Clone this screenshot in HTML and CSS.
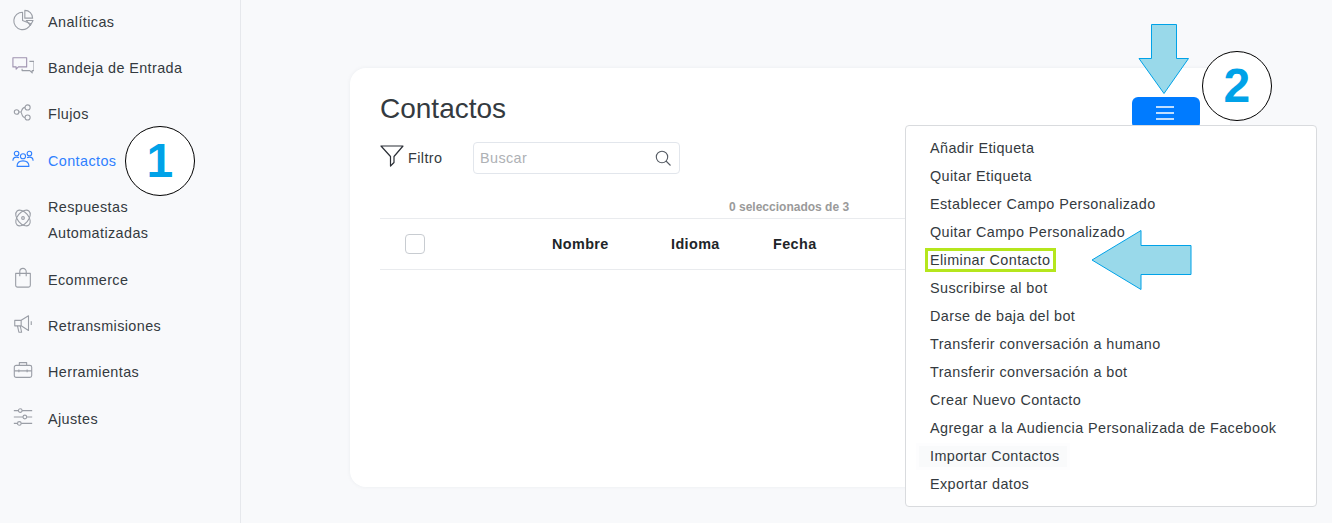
FILE: index.html
```html
<!DOCTYPE html>
<html lang="es">
<head>
<meta charset="utf-8">
<title>Contactos</title>
<link rel="stylesheet" href="styles.css">
</head>
<body>
<div class="app">
  <nav class="sidebar">
    <ul class="nav">
      <li class="nav-item"><svg class="nav-icon" viewBox="0 0 24 24"><g transform="translate(1 -.5)"><path d="M10.500 4a9.500 9.500 0 1 0 9 12.500L10.500 13z"/><path d="M13 2a8.500 8.500 0 0 1 8.500 8.500H13z"/><path d="M14.500 13h7.500l-3 5.500z"/></g></svg><span>Analíticas</span></li>
      <li class="nav-item"><svg class="nav-icon" viewBox="0 0 24 24"><path class="violet" d="M1 3h15v10H7l-2.500 2.500V13H1z"/><path d="M19 7h5v10h-2v2.500L19.500 17H11v-2"/></svg><span>Bandeja de Entrada</span></li>
      <li class="nav-item"><svg class="nav-icon" viewBox="0 0 24 24"><circle cx="5" cy="12" r="2.500"/><circle cx="17" cy="7" r="2.800"/><circle cx="17" cy="18" r="2.800"/><path d="M7.500 12h2c1.500 0 .5-5 4.700-5M9.500 12c1.500 0 .5 6 4.700 6"/></svg><span>Flujos</span></li>
      <li class="nav-item active"><svg class="nav-icon" viewBox="0 0 24 24"><circle cx="5" cy="6" r="2.500"/><circle cx="12" cy="9" r="2.800"/><circle cx="19" cy="6" r="2.500"/><path d="M1 14c0-3 1.500-4 4-4 1 0 2 .2 2.500 .8M16.500 10.800c.5-.6 1.500-.8 2.500-.8 2.500 0 4 1 4 4M5.500 20c0-4 2.500-6 6.500-6s6.500 2 6.500 6z"/></svg><span>Contactos</span></li>
      <li class="nav-item"><svg class="nav-icon" viewBox="0 0 24 24"><ellipse cx="12" cy="12" rx="10" ry="6" transform="rotate(50 12 12)"/><ellipse cx="12" cy="12" rx="10" ry="6" transform="rotate(-50 12 12)"/><circle cx="12" cy="12" r="1.500"/></svg><span>Respuestas Automatizadas</span></li>
      <li class="nav-item"><svg class="nav-icon" viewBox="0 0 24 24"><path d="M4 7h16v13a2 2 0 0 1-2 2H6a2 2 0 0 1-2-2z"/><path d="M8.500 10V5a3.500 3.500 0 0 1 7 0v5"/></svg><span>Ecommerce</span></li>
      <li class="nav-item"><svg class="nav-icon" viewBox="0 0 24 24"><path d="M3 8h7l8-5v16l-8-5H3z"/><path d="M6 14l1.500 7h3l-1.500-7M10 8v6M21 9v4"/></svg><span>Retransmisiones</span></li>
      <li class="nav-item"><svg class="nav-icon" viewBox="0 0 24 24"><rect x="2.500" y="7" width="19" height="13" rx="2"/><path d="M8 7V4h8v3M2.500 13h19M7.500 11.500v3M16.500 11.500v3"/></svg><span>Herramientas</span></li>
      <li class="nav-item"><svg class="nav-icon" viewBox="0 0 24 24"><path d="M2 5h20M2 12h20M2 19h20"/><circle class="knob" cx="9" cy="5" r="2"/><circle class="knob" cx="14" cy="12" r="2"/><circle class="knob" cx="8" cy="19" r="2"/></svg><span>Ajustes</span></li>
    </ul>
  </nav>

  <main class="content">
    <section class="card">
      <header class="card-head">
        <h1 class="title">Contactos</h1>
        <button class="menu-btn" type="button" aria-label="Menú">
          <svg class="burger" viewBox="0 0 18 14"><path d="M0 1h18M0 7h18M0 13h18"/></svg>
        </button>
      </header>
      <div class="tools">
        <div class="filter">
          <svg class="filter-icon" viewBox="0 0 24 22"><path d="M1 1h22l-9 10.500v6L10.500 21V11.500z"/></svg>
          <span>Filtro</span>
        </div>
        <div class="search">
          <span class="placeholder">Buscar</span>
          <svg class="search-icon" viewBox="0 0 16 16"><circle cx="7" cy="7" r="5.700"/><path d="M11 11l4.500 4.500"/></svg>
        </div>
      </div>
      <p class="selected">0 seleccionados de 3</p>
      <div class="table-head">
        <span class="checkbox"></span>
        <span class="col col-name">Nombre</span>
        <span class="col col-lang">Idioma</span>
        <span class="col">Fecha</span>
      </div>
    </section>
  </main>
</div>

<ul class="menu">
  <li>Añadir Etiqueta</li>
  <li>Quitar Etiqueta</li>
  <li>Establecer Campo Personalizado</li>
  <li>Quitar Campo Personalizado</li>
  <li>Eliminar Contacto</li>
  <li>Suscribirse al bot</li>
  <li>Darse de baja del bot</li>
  <li>Transferir conversación a humano</li>
  <li>Transferir conversación a bot</li>
  <li>Crear Nuevo Contacto</li>
  <li>Agregar a la Audiencia Personalizada de Facebook</li>
  <li class="hovered">Importar Contactos</li>
  <li>Exportar datos</li>
</ul>

<div class="badge badge-one">1</div>
<div class="badge badge-two">2</div>
<svg class="arrow arrow-down" viewBox="0 0 52 71"><path d="M13.500 .500h25v34h12L26 69.500 1 34.500h12.500z"/></svg>
<svg class="arrow arrow-left" viewBox="0 0 101 61"><path d="M50 .500v15h50v29H50v15L1 30z"/></svg>
<div class="highlight"></div>
</body>
</html>
```
FILE: styles.css
```css
* { box-sizing: border-box; }
html, body { margin: 0; padding: 0; height: 100%; }
body {
  position: relative;
  overflow: hidden;
  background: #f8f9fb;
  font-family: "Liberation Sans", Arial, sans-serif;
  color: #343a40;
  letter-spacing: .4px;
}
.app { display: flex; height: 523px; }

.sidebar {
  flex: 0 0 241px;
  border-right: 1px solid #e6e8ec;
  overflow: hidden;
}
.nav { list-style: none; margin: -1.500px 0 0; padding: 0 20px 0 12px; }
.nav-item {
  display: flex;
  align-items: center;
  gap: 14px;
  padding: 10.200px 0;
  font-size: 14.400px;
  line-height: 26px;
  color: #343a40;
}
.nav-item span { flex: 1; max-width: 150px; }
.nav-icon {
  flex: 0 0 22px;
  width: 22px;
  height: 22px;
  margin-top: -4px;
  fill: none;
  stroke: #9a9ea6;
  stroke-width: 1.200;
  stroke-linejoin: round;
}
.nav-icon .violet { stroke: #9f93b0; }
.nav-icon .knob { fill: #f8f9fb; }
.nav-item.active, .nav-item.active span { color: #2f80ff; }
.nav-item.active .nav-icon { stroke: #2f80ff; }

.content { flex: 1; padding: 68px 102px 36px 109px; }
.card {
  height: 419px;
  padding: 25px 30px 0;
  background: #fff;
  border-radius: 16px;
  box-shadow: 0 0 4px rgba(40, 50, 70, .06);
}
.card-head { display: flex; justify-content: space-between; align-items: flex-start; }
.title {
  margin: 0;
  font-size: 28px;
  font-weight: 400;
  line-height: 32px;
  letter-spacing: 0;
  color: #343a40;
}
.menu-btn {
  display: flex;
  align-items: center;
  justify-content: center;
  width: 68px;
  height: 32px;
  margin-top: 4px;
  padding: 0 2px 0 0;
  border: 0;
  border-radius: 6px;
  background: #007bff;
}
.burger { width: 18px; height: 14px; fill: none; stroke: #fff; stroke-width: 1.500; }

.tools { display: flex; align-items: center; gap: 32px; margin-top: 13px; height: 32px; }
.filter { display: flex; align-items: center; gap: 4px; font-size: 14.400px; color: #343a40; width: 61px; }
.filter-icon { flex: 0 0 24px; width: 24px; height: 22px; margin-top: -5px; fill: none; stroke: #2b2f36; stroke-width: 1.200; stroke-linejoin: round; }
.search {
  display: flex;
  align-items: center;
  justify-content: space-between;
  width: 207px;
  height: 32px;
  padding: 0 8px 0 6px;
  border: 1px solid #e2e6ec;
  border-radius: 4px;
  background: #fff;
}
.placeholder { font-size: 14.400px; color: #aeb1b5; }
.search-icon { width: 16px; height: 16px; fill: none; stroke: #555b63; stroke-width: 1.100; }

.selected {
  margin: 25px 0 0;
  height: 19px;
  padding-left: 349px;
  font-size: 12px;
  font-weight: 700;
  line-height: 16px;
  letter-spacing: 0;
  color: #9a9a9a;
}
.table-head {
  display: flex;
  align-items: center;
  height: 52px;
  padding-left: 25px;
  border-top: 1px solid #e9ebee;
  border-bottom: 1px solid #e9ebee;
  font-size: 14.400px;
  font-weight: 700;
  color: #212529;
}
.checkbox {
  flex: 0 0 20px;
  height: 20px;
  margin-right: 127px;
  border: 1px solid #c8ccd1;
  border-radius: 4px;
}
.col-name { width: 119px; }
.col-lang { width: 102px; }

.menu {
  position: absolute;
  left: 905px;
  top: 125px;
  width: 412px;
  height: 382px;
  margin: 0;
  padding: 8px 0 0;
  list-style: none;
  background: #fff;
  border: 1px solid #d9dbde;
  border-radius: 4px;
}
.menu li {
  height: 28px;
  padding: 0 24px;
  font-size: 14.400px;
  line-height: 28px;
  color: #343a40;
  white-space: nowrap;
}
.menu li.hovered {
  width: 148px;
  margin-left: 13px;
  padding: 0 11px;
  height: 21px;
  margin-top: 4px;
  margin-bottom: 3px;
  line-height: 21px;
  background: #f9fafb;
  box-shadow: 0 0 0 3px #fdfdfe;
}

.badge {
  position: absolute;
  width: 70px;
  height: 70px;
  display: flex;
  align-items: center;
  justify-content: center;
  background: #fff;
  border: 1px solid #000;
  border-radius: 50%;
  color: #00a2e8;
  font-size: 48px;
  font-weight: 700;
  line-height: 1;
}
.badge-one { left: 125px; top: 126px; }
.badge-two { left: 1202px; top: 51px; }

.arrow { position: absolute; fill: #99d9ea; stroke: #00a2e8; stroke-width: 1; }
.arrow-down { left: 1138px; top: 24px; width: 52px; height: 71px; }
.arrow-left { left: 1091px; top: 230px; width: 101px; height: 61px; }

.highlight {
  position: absolute;
  left: 925px;
  top: 248px;
  width: 131px;
  height: 24px;
  border: 3px solid #b5e61d;
}
```
